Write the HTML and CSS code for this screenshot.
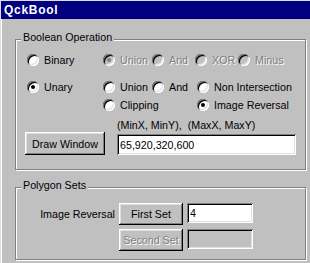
FILE: index.html
```html
<!DOCTYPE html>
<html lang="en">
<head>
  <meta charset="UTF-8">
  <title>QckBool</title>
  <link rel="stylesheet" href="styles.css">
</head>
<body>

  <div class="window">
    <!-- Title Bar -->
    <div class="titlebar">QckBool</div>

    <div class="client">

      <!-- Boolean Operation -->
      <div class="group group-ops">
        <span class="group-title">Boolean Operation</span>

        <div class="radio-row binary-row">
          <label class="opt"><span class="radio"></span>Binary</label>
          <label class="opt disabled"><span class="radio checked"></span>Union</label>
          <label class="opt disabled"><span class="radio"></span>And</label>
          <label class="opt disabled"><span class="radio"></span>XOR</label>
          <label class="opt disabled"><span class="radio"></span>Minus</label>
        </div>

        <div class="radio-row unary-rows">
          <label class="opt"><span class="radio checked"></span>Unary</label>
          <label class="opt"><span class="radio"></span>Union</label>
          <label class="opt"><span class="radio"></span>And</label>
          <label class="opt"><span class="radio"></span>Non Intersection</label>

          <label class="opt clip"><span class="radio"></span>Clipping</label>
          <label class="opt"><span class="radio checked"></span>Image Reversal</label>
        </div>

        <div class="window-row">
          <button class="btn btn-draw">Draw Window</button>
          <div class="coords">
            <div class="coords-label">(MinX, MinY), &nbsp;(MaxX, MaxY)</div>
            <input class="field field-coords" type="text" value="65,920,320,600">
          </div>
        </div>
      </div>

      <!-- Polygon Sets -->
      <div class="group group-sets">
        <span class="group-title">Polygon Sets</span>

        <div class="sets-grid">
          <div class="set-label">Image Reversal</div>
          <button class="btn">First Set</button>
          <input class="field" type="text" value="4">

          <div></div>
          <button class="btn disabled" disabled>Second Set</button>
          <input class="field" type="text" value="" disabled>
        </div>
      </div>

    </div>
  </div>

</body>
</html>
```

FILE: styles.css
```css
/* Global */
body {
  margin: 0;
  background-color: #c0c0c0;
  font-family: "Liberation Sans", Arial, sans-serif;
  font-size: 10.7px;
  line-height: 13px;
  color: #000;
}

/* Window frame */
.window {
  width: 310px;
  height: 263px;
  box-sizing: border-box;
  border-top: 1px solid #dfdfdf;
  border-left: 1px solid #dfdfdf;
  overflow: hidden;
}

.titlebar {
  height: 17px;
  padding: 1px 0 0 3px;
  background-color: #000080;
  color: #fff;
  font-weight: bold;
  font-size: 12px;
  line-height: 17px;
  letter-spacing: 0.7px;
}

.client {
  height: 244px;
  border-left: 1px solid #fff;
  padding: 20px 0 0 13px;
  box-sizing: border-box;
}

/* Group boxes */
.group {
  position: relative;
  width: 291px;
  box-sizing: border-box;
  border: 1px solid #808080;
  box-shadow: inset 1px 1px #fff, 1px 1px #fff;
}

.group-title {
  position: absolute;
  top: -9px;
  left: 5px;
  padding: 0 2px;
  background-color: #c0c0c0;
}

.group-ops {
  height: 131px;
  padding: 11px 0 0 11px;
}

.group-sets {
  height: 73px;
  margin-top: 17px;
  padding-top: 15px;
}

/* Radio buttons */
.radio-row {
  display: grid;
  align-items: start;
}

.binary-row {
  grid-template-columns: 76px 49px 43px 43px 1fr;
  height: 27px;
}

.unary-rows {
  grid-template-columns: 76px 49px 45px 1fr;
  grid-template-rows: 18px 18px;
}

.opt {
  display: flex;
  align-items: center;
  height: 18px;
  white-space: nowrap;
}

.opt.clip {
  grid-column: 2 / 4;
}

.radio {
  position: relative;
  flex: none;
  width: 12px;
  height: 12px;
  margin-right: 5px;
  border-radius: 50%;
  background-color: #fff;
  box-shadow: inset 1px 1px #808080, inset -1px -1px #fff,
              inset 2px 2px #000, inset -2px -2px #dfdfdf;
}

.radio.checked:after {
  content: "";
  position: absolute;
  top: 4px;
  left: 4px;
  width: 4px;
  height: 4px;
  border-radius: 50%;
  background-color: #000;
}

.disabled {
  color: #808080;
  text-shadow: 1px 1px 0 #fff;
}

.disabled .radio {
  background-color: #c0c0c0;
}

.disabled .radio.checked:after {
  background-color: #808080;
}

/* Draw window row */
.window-row {
  display: flex;
  align-items: flex-end;
  margin: 5px 0 0 -2px;
}

.coords {
  margin-left: 12px;
}

.coords-label {
  margin-bottom: 2px;
}

/* Buttons */
.btn {
  height: 22px;
  padding: 0;
  border: none;
  background-color: #c0c0c0;
  font-family: inherit;
  font-size: 10.7px;
  color: #000;
  box-shadow: inset -1px -1px #000, inset 1px 1px #fff,
              inset -2px -2px #808080, inset 2px 2px #dfdfdf;
}

.btn-draw {
  width: 80px;
  height: 23px;
}

.btn.disabled {
  color: #808080;
  text-shadow: 1px 1px 0 #fff;
}

/* Text fields */
.field {
  height: 20px;
  width: 66px;
  box-sizing: border-box;
  padding: 0 3px;
  border: none;
  background-color: #fff;
  font-family: inherit;
  font-size: 10.7px;
  color: #000;
  box-shadow: inset 1px 1px #808080, inset -1px -1px #fff,
              inset 2px 2px #000, inset -2px -2px #dfdfdf;
}

.field:disabled {
  background-color: #c0c0c0;
}

.field-coords {
  width: 179px;
  height: 21px;
  display: block;
}

/* Polygon sets */
.sets-grid {
  display: grid;
  grid-template-columns: 99px 64px 66px;
  grid-template-rows: 22px 22px;
  column-gap: 4px;
  row-gap: 4px;
  align-items: start;
}

.set-label {
  text-align: right;
  line-height: 22px;
}
```
